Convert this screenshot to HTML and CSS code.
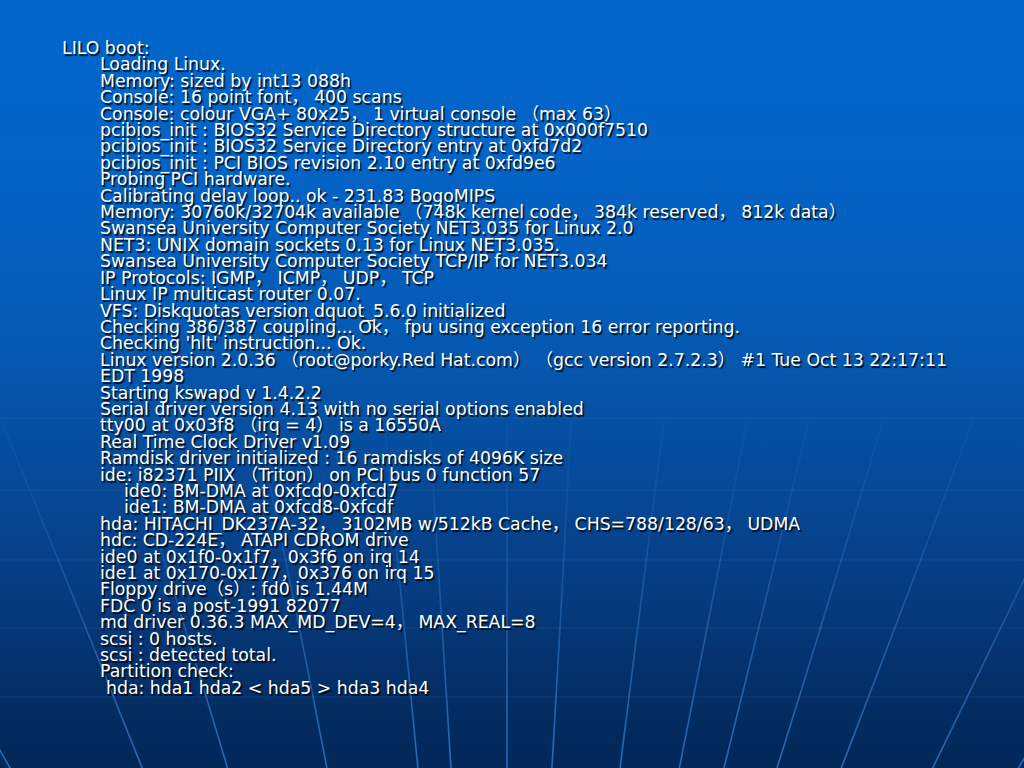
FILE: index.html
```html
<!DOCTYPE html>
<html lang="en">
<head>
<meta charset="utf-8">
<title>LILO boot</title>
<link rel="stylesheet" href="styles.css">
</head>
<body>
<div class="slide">
  <svg class="globe" width="1024" height="768" viewBox="0 0 1024 768" aria-hidden="true">
    <defs>
      <linearGradient id="fade" gradientUnits="userSpaceOnUse" x1="0" y1="380" x2="0" y2="768">
        <stop offset="0" stop-color="#3f8fe6" stop-opacity="0"/>
        <stop offset="0.4" stop-color="#3f8fe6" stop-opacity="0.22"/>
        <stop offset="1" stop-color="#3f8fe6" stop-opacity="0.65"/>
      </linearGradient>
    </defs>
    <g class="lat">
      <line x1="0" y1="418" x2="1024" y2="418"/>
      <line x1="0" y1="490" x2="1024" y2="490"/>
      <line x1="0" y1="560" x2="1024" y2="560"/>
      <line x1="0" y1="628" x2="1024" y2="628"/>
      <line x1="0" y1="697" x2="1024" y2="697"/>
    </g>
    <g stroke="url(#fade)" stroke-width="1.6" fill="none">
      <path d="M -183 420 Q -85 600 28 800"/>
      <path d="M 1 420 Q 75 600 155 800"/>
      <path d="M 119 420 Q 178 600 237 800"/>
      <path d="M 256 420 Q 295 600 333 800"/>
      <path d="M 384 420 Q 402 600 421 800"/>
      <path d="M 429 420 Q 440 600 453 800"/>
      <path d="M 507 420 Q 507 600 507 800"/>
      <path d="M 571 420 Q 562 600 550 800"/>
      <path d="M 664 420 Q 642 600 616 800"/>
      <path d="M 747 420 Q 713 600 673 800"/>
      <path d="M 809 420 Q 766 600 716 800"/>
      <path d="M 883 420 Q 830 600 767 800"/>
      <path d="M 973 420 Q 906 600 829 800"/>
      <path d="M 1100 420 Q 1015 600 917 800"/>
      <path d="M 1220 420 Q 1115 600 1000 800"/>
    </g>
  </svg>
  <div class="log">
    <div class="ln">LILO boot:</div>
    <div class="ln in">Loading Linux.</div>
    <div class="ln in">Memory: sized by int13 088h</div>
    <div class="ln in">Console: 16 point font， 400 scans</div>
    <div class="ln in">Console: colour VGA+ 80x25， 1 virtual console （max 63）</div>
    <div class="ln in">pcibios_init : BIOS32 Service Directory structure at 0x000f7510</div>
    <div class="ln in">pcibios_init : BIOS32 Service Directory entry at 0xfd7d2</div>
    <div class="ln in">pcibios_init : PCI BIOS revision 2.10 entry at 0xfd9e6</div>
    <div class="ln in">Probing PCI hardware.</div>
    <div class="ln in">Calibrating delay loop.. ok - 231.83 BogoMIPS</div>
    <div class="ln in">Memory: 30760k/32704k available （748k kernel code， 384k reserved， 812k data）</div>
    <div class="ln in">Swansea University Computer Society NET3.035 for Linux 2.0</div>
    <div class="ln in">NET3: UNIX domain sockets 0.13 for Linux NET3.035.</div>
    <div class="ln in">Swansea University Computer Society TCP/IP for NET3.034</div>
    <div class="ln in">IP Protocols: IGMP， ICMP， UDP， TCP</div>
    <div class="ln in">Linux IP multicast router 0.07.</div>
    <div class="ln in">VFS: Diskquotas version dquot_5.6.0 initialized</div>
    <div class="ln in">Checking 386/387 coupling... Ok， fpu using exception 16 error reporting.</div>
    <div class="ln in">Checking 'hlt' instruction... Ok.</div>
    <div class="ln in">Linux version 2.0.36 （root@porky.Red Hat.com） （gcc version 2.7.2.3） #1 Tue Oct 13 22:17:11</div>
    <div class="ln in">EDT 1998</div>
    <div class="ln in">Starting kswapd v 1.4.2.2</div>
    <div class="ln in">Serial driver version 4.13 with no serial options enabled</div>
    <div class="ln in">tty00 at 0x03f8 （irq = 4） is a 16550A</div>
    <div class="ln in">Real Time Clock Driver v1.09</div>
    <div class="ln in">Ramdisk driver initialized : 16 ramdisks of 4096K size</div>
    <div class="ln in">ide: i82371 PIIX （Triton） on PCI bus 0 function 57</div>
    <div class="ln in2">ide0: BM-DMA at 0xfcd0-0xfcd7</div>
    <div class="ln in2">ide1: BM-DMA at 0xfcd8-0xfcdf</div>
    <div class="ln in">hda: HITACHI_DK237A-32， 3102MB w/512kB Cache， CHS=788/128/63， UDMA</div>
    <div class="ln in">hdc: CD-224E， ATAPI CDROM drive</div>
    <div class="ln in">ide0 at 0x1f0-0x1f7，0x3f6 on irq 14</div>
    <div class="ln in">ide1 at 0x170-0x177，0x376 on irq 15</div>
    <div class="ln in">Floppy drive（s）: fd0 is 1.44M</div>
    <div class="ln in">FDC 0 is a post-1991 82077</div>
    <div class="ln in">md driver 0.36.3 MAX_MD_DEV=4， MAX_REAL=8</div>
    <div class="ln in">scsi : 0 hosts.</div>
    <div class="ln in">scsi : detected total.</div>
    <div class="ln in">Partition check:</div>
    <div class="ln in3">hda: hda1 hda2 &lt; hda5 &gt; hda3 hda4</div>
  </div>
</div>
</body>
</html>
```

FILE: styles.css
```css
html, body {
  margin: 0;
  padding: 0;
}

body {
  width: 1024px;
  height: 768px;
  overflow: hidden;
}

.slide {
  position: relative;
  width: 1024px;
  height: 768px;
  background: linear-gradient(to bottom, #0066cc 0%, #0463c6 22%, #055bb6 42%, #064c9c 60%, #063d82 76%, #032c62 92%, #02285a 100%);
  overflow: hidden;
}

.globe {
  position: absolute;
  left: 0;
  top: 0;
  display: block;
}

.lat line {
  stroke: #3f8fe6;
  stroke-opacity: 0.18;
  stroke-width: 1.2;
}

.log {
  position: relative;
  padding: 40px 0 0 62px;
  font-family: "DejaVu Sans", Verdana, "Noto Sans CJK SC", sans-serif;
  font-size: 17.3px;
  line-height: 16.41px;
  color: #ffffff;
  text-shadow: 1.5px 1.5px 1px rgba(0, 0, 0, 0.85);
}

.ln {
  height: 16.41px;
  white-space: pre;
}

.in {
  padding-left: 38px;
}

.in2 {
  padding-left: 62px;
}

.in3 {
  padding-left: 44px;
}
```
